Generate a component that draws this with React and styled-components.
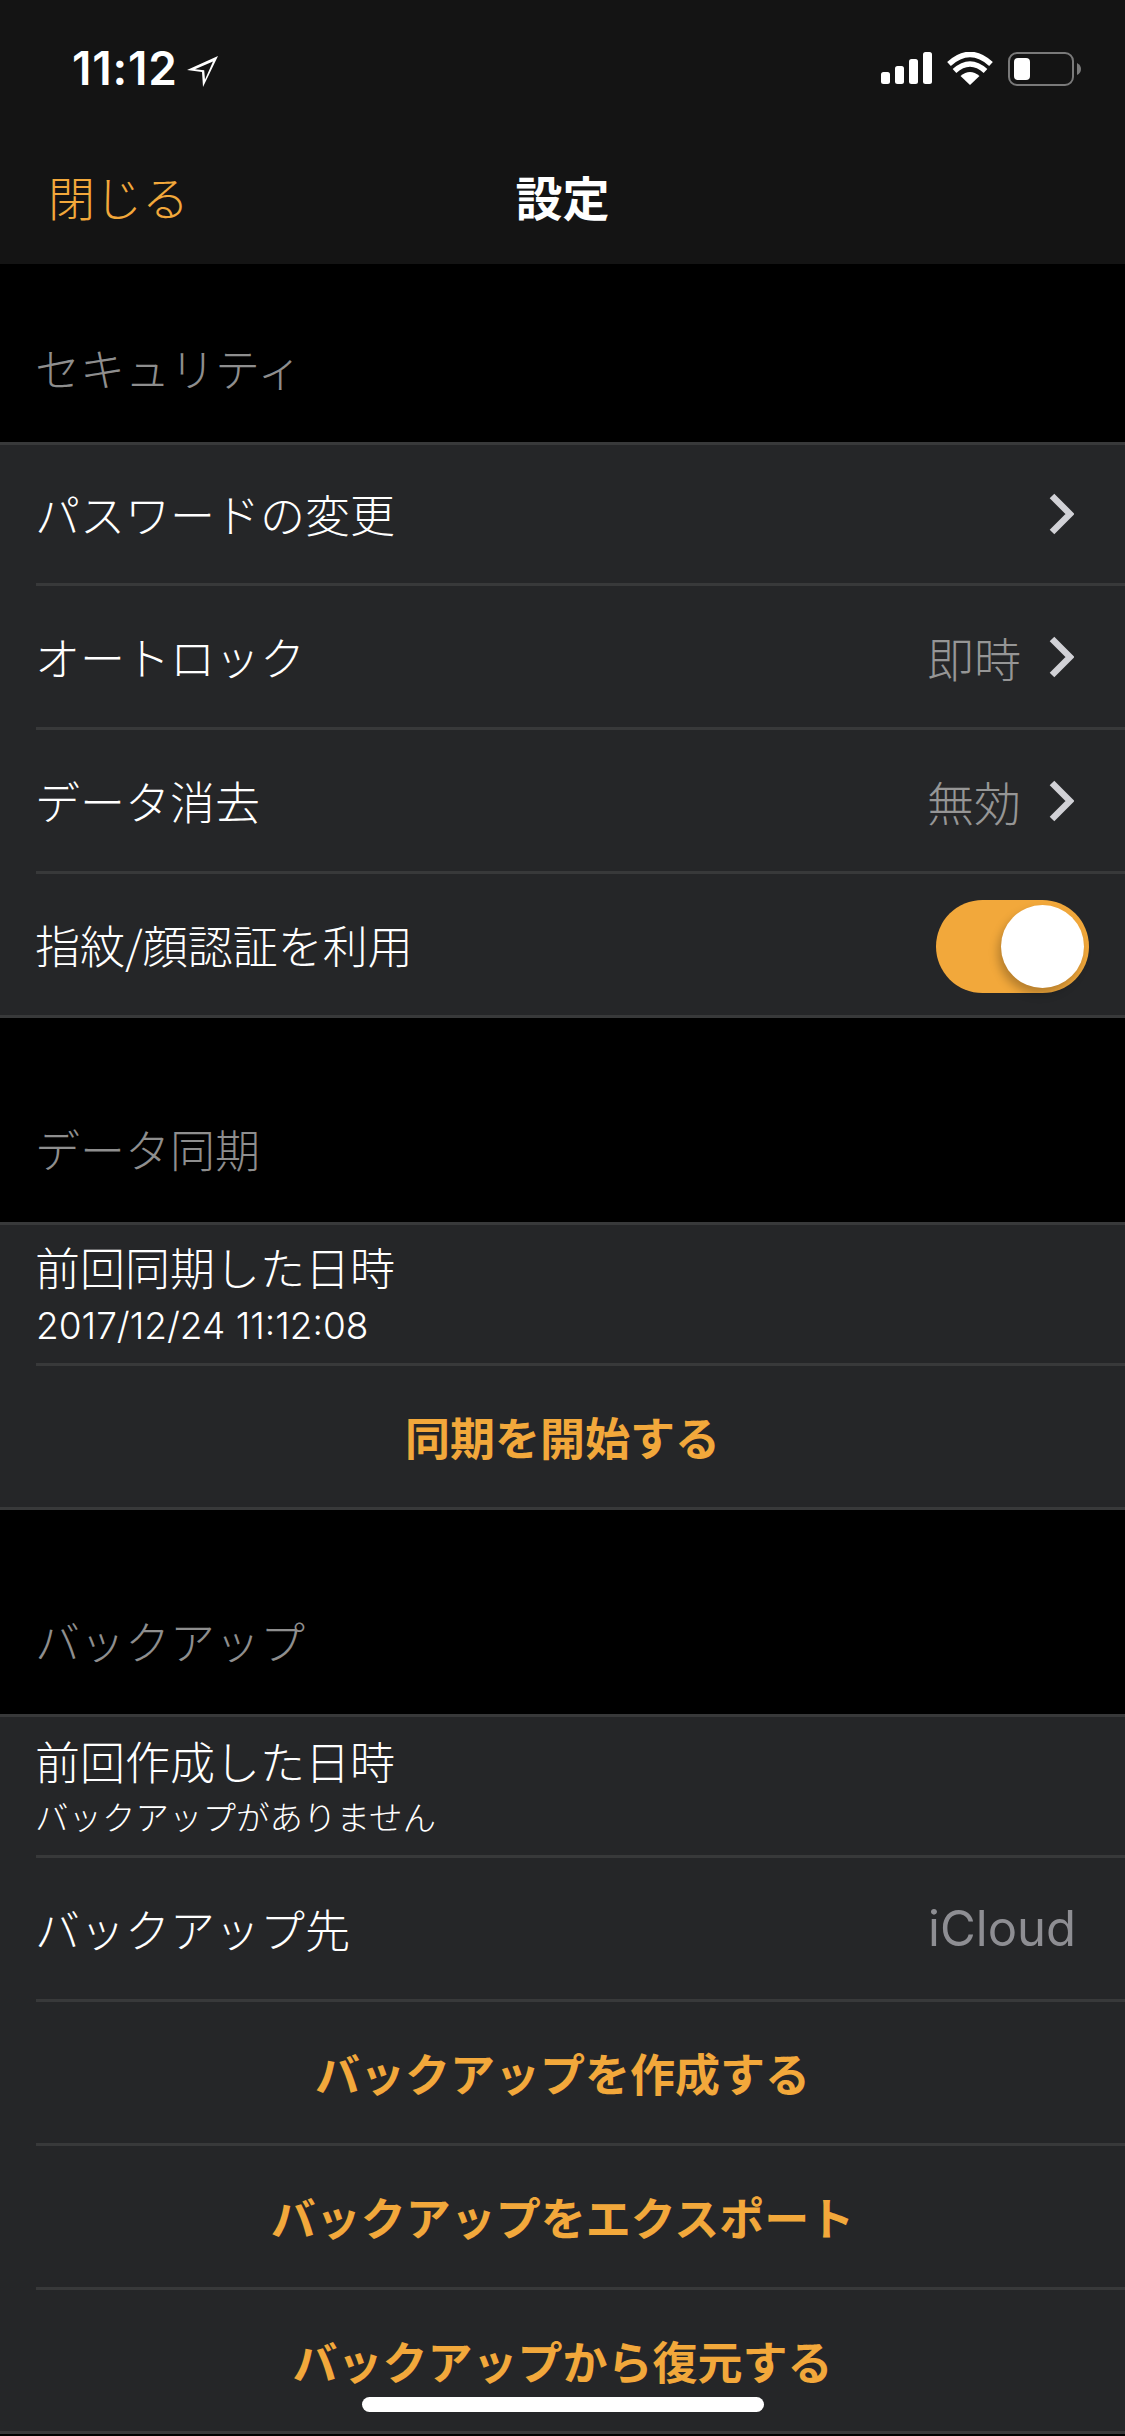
import React from "react";
import styled, { createGlobalStyle } from "styled-components";

const ORANGE = "#f2a83b";

const GlobalStyle = createGlobalStyle`
  html, body {
    margin: 0;
    padding: 0;
    background: #000;
  }
  body {
    font-family: "Noto Sans CJK JP", "Inter", sans-serif;
    font-weight: 300;
  }
`;

function App() {
  return (
    <Page>
      <GlobalStyle />
      <Header>
        <StatusBar>
          <TimeGroup>
            <Time>11:12</Time>
            <LocationArrow />
          </TimeGroup>
          <StatusIcons>
            <SignalIcon />
            <WifiIcon />
            <BatteryIcon />
          </StatusIcons>
        </StatusBar>
        <NavBar>
          <CloseLink>閉じる</CloseLink>
          <NavTitle>設定</NavTitle>
        </NavBar>
      </Header>

      <SectionLabel>セキュリティ</SectionLabel>
      <Group>
        <Row>
          <RowTitle>パスワードの変更</RowTitle>
          <Chevron />
        </Row>
        <Row>
          <RowTitle>オートロック</RowTitle>
          <RowValue>即時</RowValue>
          <Chevron />
        </Row>
        <Row>
          <RowTitle>データ消去</RowTitle>
          <RowValue>無効</RowValue>
          <Chevron />
        </Row>
        <Row>
          <RowTitle>指紋/顔認証を利用</RowTitle>
          <Toggle>
            <Thumb />
          </Toggle>
        </Row>
      </Group>

      <SectionLabel $spaced>データ同期</SectionLabel>
      <Group>
        <Row>
          <TwoLine>
            <RowTitle>前回同期した日時</RowTitle>
            <DateText>2017/12/24 11:12:08</DateText>
          </TwoLine>
        </Row>
        <Row>
          <ActionLabel>同期を開始する</ActionLabel>
        </Row>
      </Group>

      <SectionLabel $spaced>バックアップ</SectionLabel>
      <Group>
        <Row>
          <TwoLine>
            <RowTitle>前回作成した日時</RowTitle>
            <SubText>バックアップがありません</SubText>
          </TwoLine>
        </Row>
        <Row>
          <RowTitle>バックアップ先</RowTitle>
          <LatinValue>iCloud</LatinValue>
        </Row>
        <Row>
          <ActionLabel>バックアップを作成する</ActionLabel>
        </Row>
        <Row>
          <ActionLabel>バックアップをエクスポート</ActionLabel>
        </Row>
        <Row>
          <ActionLabel>バックアップから復元する</ActionLabel>
        </Row>
      </Group>

      <HomeIndicator />
    </Page>
  );
}

function LocationArrow() {
  return (
    <ArrowSvg viewBox="0 0 32 32" aria-hidden="true">
      <path
        d="M31 0 L0 14 L15 16 L16 31 Z M26 5.5 L8 13.2 L17.2 14.2 L18 23.5 Z"
        fill="#fff"
        fillRule="evenodd"
      />
    </ArrowSvg>
  );
}

function SignalIcon() {
  return (
    <IconSvg width="51" height="32" viewBox="0 0 51 32" aria-hidden="true">
      <rect x="0" y="20" width="9" height="12" rx="2.5" fill="#fff" />
      <rect x="14" y="14" width="9" height="18" rx="2.5" fill="#fff" />
      <rect x="28" y="7" width="9" height="25" rx="2.5" fill="#fff" />
      <rect x="42" y="0" width="9" height="32" rx="2.5" fill="#fff" />
    </IconSvg>
  );
}

function WifiIcon() {
  return (
    <IconSvg width="46" height="33" viewBox="0 0 46 33" aria-hidden="true">
      <path d="M23 33 L13.5 24 Q23 16 32.5 24 Z" fill="#fff" />
      <path d="M7.5 19 Q23 5 38.5 19" fill="none" stroke="#fff" strokeWidth="5.5" />
      <path d="M2 12 Q23 -7 44 12" fill="none" stroke="#fff" strokeWidth="5.5" />
    </IconSvg>
  );
}

function BatteryIcon() {
  return (
    <IconSvg width="73" height="34" viewBox="0 0 73 34" aria-hidden="true">
      <rect x="1" y="1" width="64" height="32" rx="8" fill="none" stroke="#7a7a7a" strokeWidth="2" />
      <rect x="6" y="6" width="16" height="22" rx="4" fill="#fff" />
      <path d="M69 11 Q73 13 73 17 Q73 21 69 23 Z" fill="#7a7a7a" />
    </IconSvg>
  );
}

function Chevron() {
  return (
    <ChevronSvg viewBox="0 0 25 42" aria-hidden="true">
      <path d="M3 3 L21 21 L3 39" fill="none" stroke="#d1d1d6" strokeWidth="6.5" />
    </ChevronSvg>
  );
}

const Page = styled.div`
  position: relative;
  width: 1125px;
  height: 2436px;
  overflow: hidden;
  background: #000;
`;

const Header = styled.header`
  height: 264px;
  background: #141414;
  display: flex;
  flex-direction: column;
`;

const StatusBar = styled.div`
  height: 132px;
  padding: 0 44px 0 72px;
  box-sizing: border-box;
  display: flex;
  align-items: flex-start;
  justify-content: space-between;
`;

const TimeGroup = styled.div`
  display: flex;
  align-items: flex-start;
  padding-top: 41px;
  gap: 9px;
`;

const Time = styled.span`
  font-family: "Inter", sans-serif;
  font-size: 46px;
  font-weight: 600;
  letter-spacing: 0.8px;
  line-height: 55px;
  color: #fff;
`;

const ArrowSvg = styled.svg`
  width: 32px;
  height: 32px;
  margin-top: 15px;
`;

const StatusIcons = styled.div`
  display: flex;
  align-items: flex-start;
  padding-top: 52px;
  gap: 15px;
`;

const IconSvg = styled.svg`
  display: block;
`;

const NavBar = styled.nav`
  flex: 1;
  display: grid;
  grid-template-columns: 1fr auto 1fr;
  align-items: center;
  padding: 0 48px 6px;
`;

const CloseLink = styled.span`
  font-size: 47px;
  color: ${ORANGE};
  grid-column: 1;
`;

const NavTitle = styled.span`
  font-size: 47px;
  font-weight: 700;
  color: #fff;
  grid-column: 2;
`;

const SectionLabel = styled.div`
  height: ${(p) => (p.$spaced ? "204px" : "178px")};
  padding: 0 35px ${(p) => (p.$spaced ? "43px" : "44px")};
  box-sizing: border-box;
  display: flex;
  align-items: flex-end;
  font-size: 45px;
  line-height: 60px;
  color: #8e8e8e;
`;

const Group = styled.section`
  background: #252628;
  border-top: 3px solid #38393a;
  border-bottom: 3px solid #38393a;
`;

const Row = styled.div`
  position: relative;
  height: 138px;
  padding: 0 51px 0 35px;
  display: flex;
  align-items: center;

  & + & {
    margin-top: 3px;
    height: 141px;
  }
  & + &::before {
    content: "";
    position: absolute;
    left: 36px;
    right: 0;
    top: -3px;
    height: 3px;
    background: #38393a;
  }
`;

const RowTitle = styled.span`
  flex: 1;
  font-size: 45px;
  line-height: 60px;
  color: #fff;
`;

const RowValue = styled.span`
  font-size: 47px;
  color: #969696;
  margin-right: 28px;
`;

const LatinValue = styled.span`
  font-family: "Inter", sans-serif;
  font-size: 49px;
  font-weight: 400;
  margin-right: -2px;
  color: #8e8e93;
`;

const ChevronSvg = styled.svg`
  width: 25px;
  height: 42px;
  flex: none;
`;

const Toggle = styled.div`
  position: relative;
  width: 153px;
  height: 93px;
  margin: 4px -15px 0 0;
  border-radius: 47px;
  background: ${ORANGE};
`;

const Thumb = styled.div`
  position: absolute;
  top: 5px;
  right: 5px;
  width: 83px;
  height: 83px;
  border-radius: 50%;
  background: #fff;
  box-shadow: -3px 6px 10px rgba(0, 0, 0, 0.25);
`;

const TwoLine = styled.div`
  display: flex;
  flex-direction: column;
`;

const DateText = styled.span`
  font-family: "Inter", sans-serif;
  font-size: 37px;
  font-weight: 300;
  line-height: 52px;
  margin: 3px 0 0 1px;
  color: #fff;
`;

const SubText = styled.span`
  font-size: 33.5px;
  line-height: 50px;
  color: #fff;
`;

const ActionLabel = styled.span`
  flex: 1;
  margin-right: -16px;
  text-align: center;
  font-size: 45px;
  font-weight: 600;
  color: ${ORANGE};
`;

const HomeIndicator = styled.div`
  position: absolute;
  left: 362px;
  bottom: 24px;
  width: 402px;
  height: 15px;
  border-radius: 8px;
  background: #fff;
`;

export default App;
